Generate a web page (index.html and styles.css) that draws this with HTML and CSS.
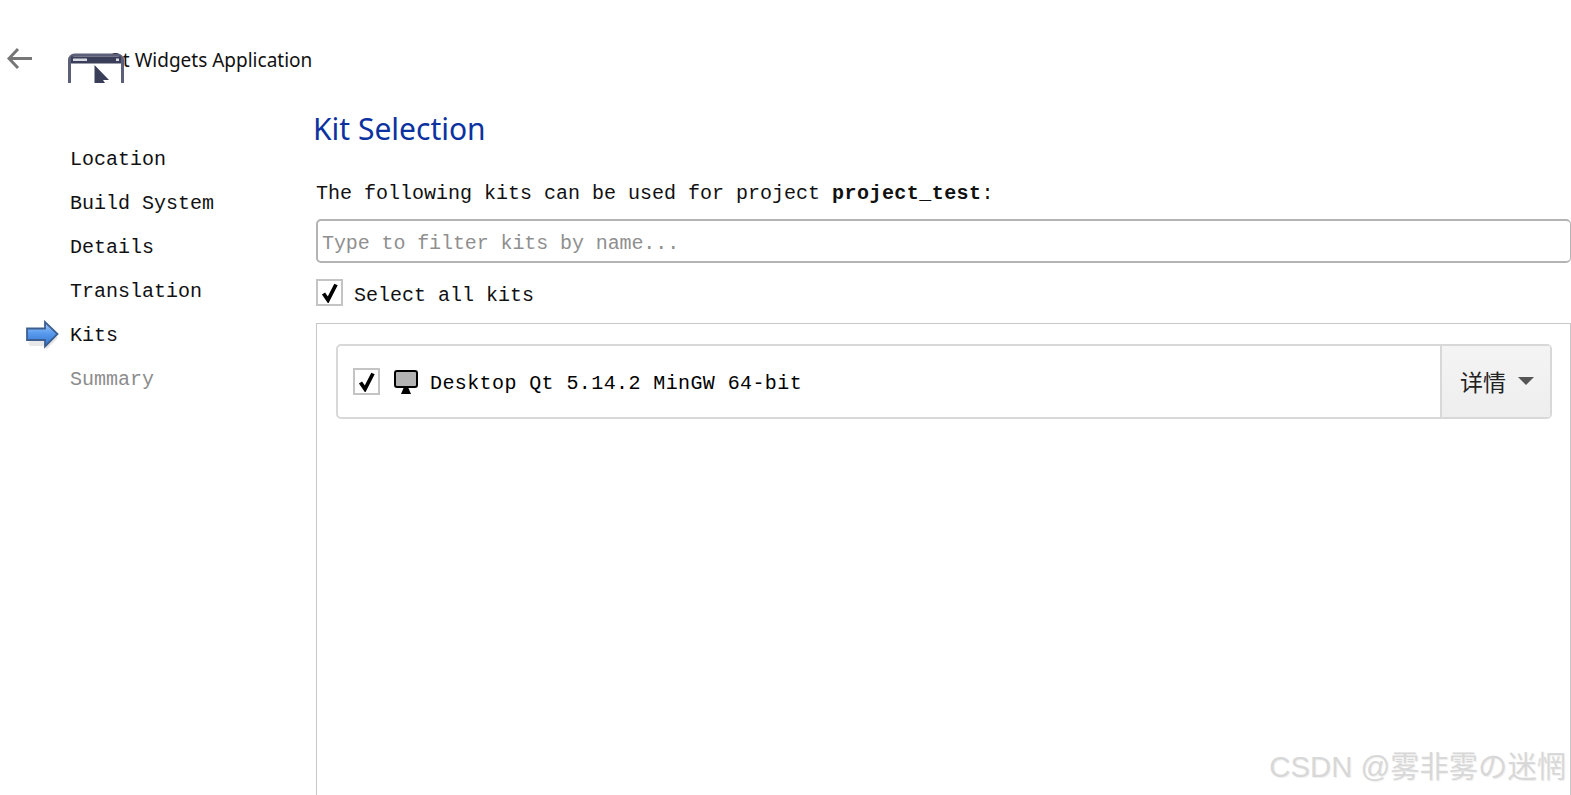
FILE: index.html
```html
<!DOCTYPE html>
<html lang="en">
<head>
<meta charset="utf-8">
<title>Kit Selection</title>
<link rel="stylesheet" href="styles.css">
</head>
<body>
<div class="page">
  <header class="head">
    <svg class="back" width="26" height="24" viewBox="0 0 26 24"><path d="M11 2 2 11.500 11 21M2.500 11.500H25" fill="none" stroke="#777" stroke-width="3"/></svg>
    <svg class="appicon" width="56" height="30" viewBox="0 0 56 30">
      <path d="M1.500 30V7a5 5 0 0 1 5-5h43a5 5 0 0 1 5 5v23" fill="#fff" stroke="#5b5f78" stroke-width="3"/>
      <path d="M3 3.500h50v7H3z" fill="#3b3e59"/>
      <path d="M5 5.500h14v2.500H5zM48 5.500h3v2.500h-3z" fill="#d9dbe4"/>
      <path d="M26.500 12 41 27H35L37 30H26.500z" fill="#3b3e59"/>
    </svg>
    <span class="apptitle">Qt Widgets Application</span>
  </header>
  <div class="body">
    <nav class="steps">
      <div class="step"><span class="mark"></span>Location</div>
      <div class="step"><span class="mark"></span>Build System</div>
      <div class="step"><span class="mark"></span>Details</div>
      <div class="step"><span class="mark"></span>Translation</div>
      <div class="step"><span class="mark"><svg width="34" height="30" viewBox="0 0 34 30">
        <defs><linearGradient id="ar" x1="0" y1="0" x2="0" y2="1"><stop offset="0" stop-color="#a6cdf7"/><stop offset="0.45" stop-color="#5a9bee"/><stop offset="1" stop-color="#2f73cf"/></linearGradient></defs>
        <path d="M2 23 4 26H20V30L32 18 20 6z" fill="#d8d8d8" opacity=".6"/>
        <path d="M1 8.500H19V2L31.500 14 19 26.500V20H1z" fill="url(#ar)" stroke="#3d5f8f" stroke-width="1.800"/>
      </svg></span>Kits</div>
      <div class="step todo"><span class="mark"></span>Summary</div>
    </nav>
    <main class="content">
      <h1 class="heading">Kit Selection</h1>
      <p class="intro">The following kits can be used for project <b>project_test</b>:</p>
      <div class="filter">Type to filter kits by name...</div>
      <div class="selectall">
        <span class="check"><svg width="18" height="20" viewBox="0 0 18 20"><path d="M2.500 10.500 7 17 15 1.500" fill="none" stroke="#000" stroke-width="3.800"/></svg></span>
        <span class="selectlabel">Select all kits</span>
      </div>
      <section class="frame">
        <div class="kit">
          <span class="check"><svg width="18" height="20" viewBox="0 0 18 20"><path d="M2.500 10.500 7 17 15 1.500" fill="none" stroke="#000" stroke-width="3.800"/></svg></span>
          <svg class="monitor" width="24" height="24" viewBox="0 0 24 24"><rect x="1" y="1" width="22" height="16" rx="2" fill="#b3b3b3" stroke="#000" stroke-width="2"/><path d="M10 17h4l3 7H7z" fill="#000"/></svg>
          <span class="kitname">Desktop Qt 5.14.2 MinGW 64-bit</span>
          <div class="details"><span>详情</span><i class="caret"></i></div>
        </div>
      </section>
    </main>
  </div>
  <div class="watermark">CSDN @雾非雾の迷惘</div>
</div>
</body>
</html>
```
FILE: styles.css
```css
* { box-sizing: border-box; }
html, body { margin: 0; padding: 0; background: #fff; }
.page {
  position: relative;
  display: flex;
  flex-direction: column;
  width: 1571px;
  height: 795px;
  overflow: hidden;
  font-family: "Liberation Mono", monospace;
  font-size: 20px;
  color: #111;
}
.head {
  display: flex;
  align-items: flex-start;
  height: 83px;
  flex: none;
  padding: 47px 0 0 7px;
}
.back { margin-right: 35px; flex: none; }
.appicon { position: relative; z-index: 1; flex: none; margin-top: 6px; margin-right: -16px; }
.apptitle {
  font-family: "Noto Sans", sans-serif;
  font-size: 19px;
  line-height: 26px;
  color: #111;
}
.body { display: flex; flex: 1; min-height: 0; }
.steps {
  width: 316px;
  flex: none;
  padding-top: 54px;
  display: flex;
  flex-direction: column;
}
.step {
  display: flex;
  align-items: center;
  height: 44px;
  white-space: pre;
}
.mark { width: 70px; padding-left: 26px; flex: none; display: flex; }
.todo { color: #8c8c8c; }
.content { flex: 1; min-width: 0; display: flex; flex-direction: column; }
.heading {
  margin: 25px 0 0 -3px;
  font-family: "Noto Sans", sans-serif;
  font-weight: 400;
  font-size: 30px;
  line-height: 42px;
  color: #0b32a0;
}
.intro { margin: 24px 0 0; line-height: 40px; white-space: pre; height: 39px; }
.intro b { font-weight: 700; letter-spacing: .45px; }
.filter {
  height: 44px;
  border: 2px solid #b4b4b4;
  border-right-width: 1px;
  border-radius: 5px;
  margin-top: 6px;
  padding: 2px 0 0 4px;
  line-height: 42px;
  color: #8f8f8f;
  letter-spacing: -.1px;
}
.selectall { display: flex; align-items: center; gap: 11px; margin-top: 16px; height: 27px; }
.selectlabel { padding-top: 6px; }
.check {
  width: 27px;
  height: 27px;
  flex: none;
  border: 2px solid #c4c4c4;
  background: #fff;
  display: flex;
  align-items: center;
  justify-content: center;
}
.frame {
  flex: 1;
  min-height: 0;
  margin-top: 17px;
  border: 1px solid #c8c8c8;
  border-bottom: 0;
  padding: 20px 18px 0 19px;
}
.kit {
  display: flex;
  align-items: center;
  height: 75px;
  border: 2px solid #d8d8d8;
  border-radius: 5px;
  padding-left: 15px;
  color: #000;
}
.monitor { margin-left: 14px; flex: none; }
.kitname { margin-left: 12px; padding-top: 4px; flex: 1; white-space: pre; letter-spacing: .4px; }
.details {
  width: 110px;
  height: 71px;
  flex: none;
  display: flex;
  align-items: center;
  gap: 12px;
  padding: 0 0 2px 18px;
  border-left: 2px solid #d8d8d8;
  background: linear-gradient(#f4f4f4, #eeeeee);
  font-family: "Noto Sans CJK SC", sans-serif;
  font-size: 23px;
  color: #222;
}
.caret {
  width: 0;
  height: 0;
  border-left: 8px solid transparent;
  border-right: 8px solid transparent;
  border-top: 8px solid #555;
}
.watermark {
  position: absolute;
  right: 5px;
  bottom: 8px;
  font-family: "Liberation Sans", "Noto Sans CJK SC", sans-serif;
  font-size: 29.300px;
  line-height: 40px;
  color: #d8d8d8;
  text-shadow: 1px 1px 1px #eee;
  white-space: nowrap;
}
```
